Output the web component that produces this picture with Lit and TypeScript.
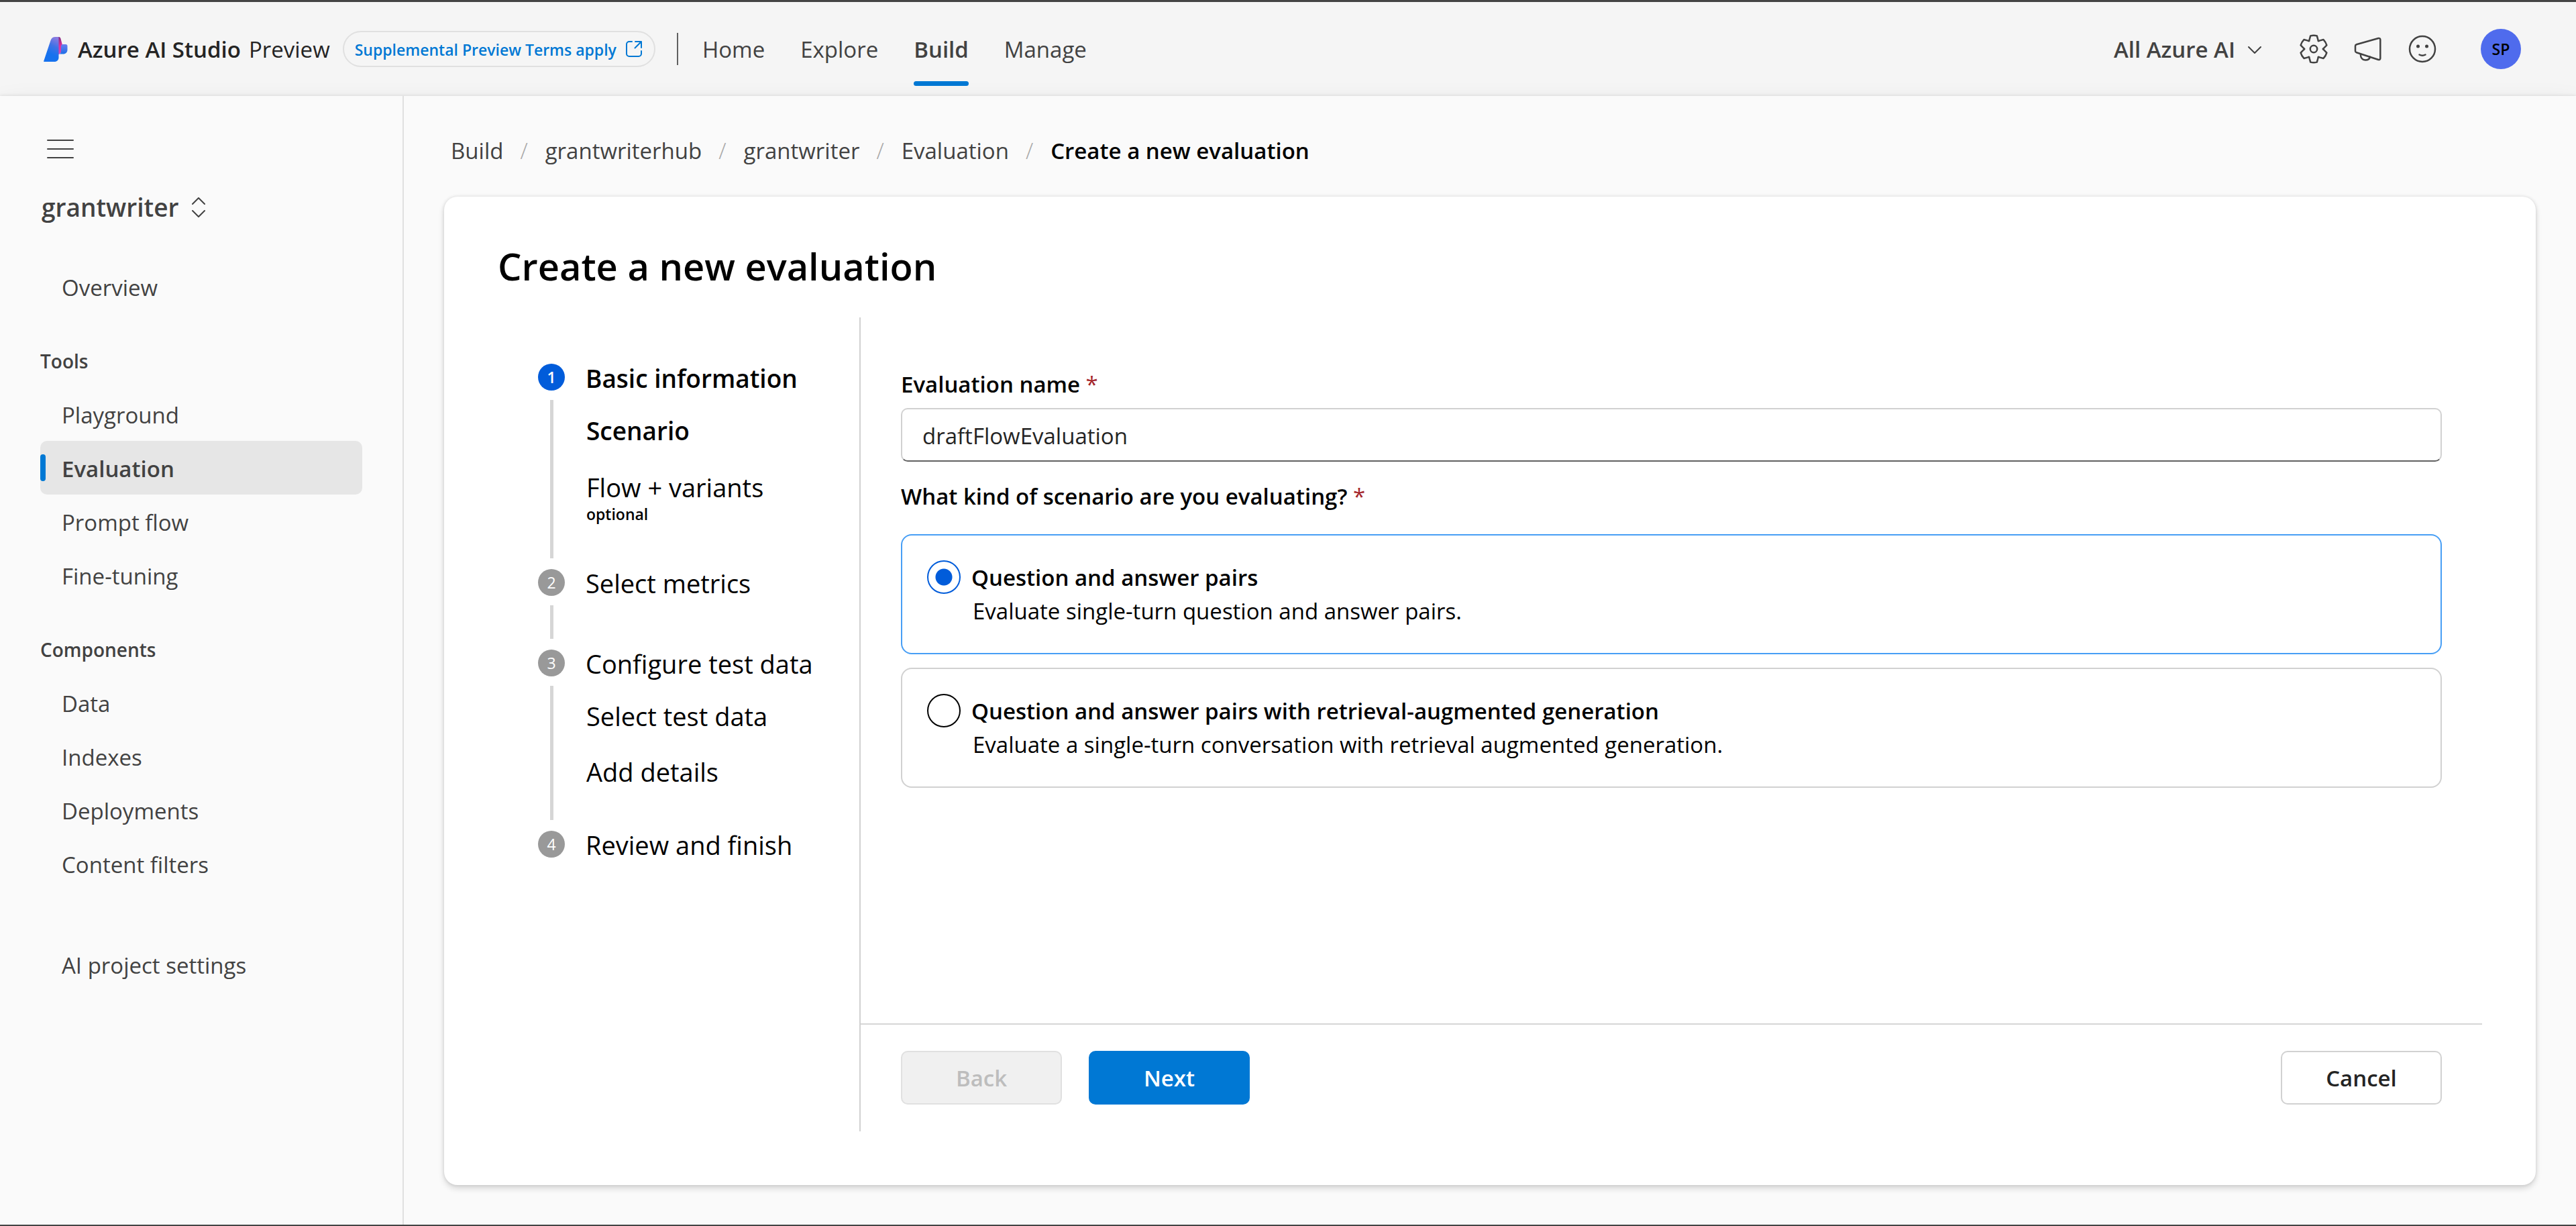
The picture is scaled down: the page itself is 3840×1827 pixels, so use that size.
import { LitElement, html, css, svg, nothing } from "lit";
import { customElement, state } from "lit/decorators.js";
import { classMap } from "lit/directives/class-map.js";

interface NavGroup {
  heading?: string;
  items: string[];
}

interface SubStep {
  label: string;
  note?: string;
  current?: boolean;
}

interface Step {
  label: string;
  current?: boolean;
  children: SubStep[];
}

interface Scenario {
  id: string;
  title: string;
  description: string;
}

const TOP_LINKS = ["Home", "Explore", "Build", "Manage"];

const NAV: NavGroup[] = [
  { heading: "Tools", items: ["Playground", "Evaluation", "Prompt flow", "Fine-tuning"] },
  { heading: "Components", items: ["Data", "Indexes", "Deployments", "Content filters"] },
];

const CRUMBS = ["Build", "grantwriterhub", "grantwriter", "Evaluation"];

const STEPS: Step[] = [
  {
    label: "Basic information",
    current: true,
    children: [
      { label: "Scenario", current: true },
      { label: "Flow + variants", note: "optional" },
    ],
  },
  { label: "Select metrics", children: [] },
  {
    label: "Configure test data",
    children: [{ label: "Select test data" }, { label: "Add details" }],
  },
  { label: "Review and finish", children: [] },
];

const SCENARIOS: Scenario[] = [
  {
    id: "qa",
    title: "Question and answer pairs",
    description: "Evaluate single-turn question and answer pairs.",
  },
  {
    id: "rag",
    title: "Question and answer pairs with retrieval-augmented generation",
    description: "Evaluate a single-turn conversation with retrieval augmented generation.",
  },
];

/* One tooth of the settings gear, repeated every 60 degrees. */
const gearPath = (() => {
  const tooth = [[-6.5, -13.5], [-4.8, -19.6], [4.8, -19.6], [6.5, -13.5]];
  const points: string[] = [];
  for (let k = 0; k < 6; k++) {
    const a = (k * Math.PI) / 3;
    const p = tooth.map(([x, y]) => [
      24 + x * Math.cos(a) - y * Math.sin(a),
      24 + x * Math.sin(a) + y * Math.cos(a),
    ]);
    const b = ((k + 0.5) * Math.PI) / 3;
    const next = ((k + 1) * Math.PI) / 3;
    const nx = 24 + tooth[0][0] * Math.cos(next) - tooth[0][1] * Math.sin(next);
    const ny = 24 + tooth[0][0] * Math.sin(next) + tooth[0][1] * Math.cos(next);
    const qx = 24 + 12.5 * Math.sin(b);
    const qy = 24 - 12.5 * Math.cos(b);
    points.push(
      `${k ? "L" : "M"}${p[0]}L${p[1]}Q${24 + 20.8 * Math.sin(a)},${24 - 20.8 * Math.cos(a)} ${p[2]}L${p[3]}Q${qx},${qy} ${nx},${ny}`,
    );
  }
  return points.join("") + "Z";
})();

const logo = svg`
  <svg class="logo" viewBox="0 0 36 38" aria-hidden="true">
    <defs>
      <linearGradient id="wing" x1="0.7" y1="0" x2="0.4" y2="1">
        <stop offset="0" stop-color="#8a7be0"></stop>
        <stop offset="0.35" stop-color="#3f72e6"></stop>
        <stop offset="0.7" stop-color="#1672ee"></stop>
      </linearGradient>
      <linearGradient id="fold" x1="0" y1="0" x2="0" y2="1">
        <stop offset="0" stop-color="#7b2a80"></stop>
        <stop offset="0.5" stop-color="#e0309a"></stop>
        <stop offset="1" stop-color="#c94fc4"></stop>
      </linearGradient>
      <linearGradient id="block" x1="0" y1="0" x2="0" y2="1">
        <stop offset="0" stop-color="#6a80ee"></stop>
        <stop offset="1" stop-color="#1c6fe8"></stop>
      </linearGradient>
    </defs>
    <path fill="url(#fold)" d="M17 1h5.500c2 0 2.800 1.500 3.200 3.500L28.500 15v7l-5.500 5h-1z"></path>
    <path fill="url(#block)" d="M28.500 12H33c1.500 0 2.500 1 2.500 2.500V20c0 4-2.500 6.500-6.500 6.500h-6.500c3 0 3.500-2.500 3.500-5v-6c0-2 .8-3.500 2.500-3.500z"></path>
    <path fill="url(#wing)" d="M17.500 1h5v30.500c0 4-2.500 6.500-6.500 6.500H1c-.6 0-1-.5-.8-1.100L10.500 6.200C11.600 2.800 14 1 17.500 1z"></path>
  </svg>`;

@customElement("app-root")
export class AppRoot extends LitElement {
  @state() private scenario = "qa";
  @state() private evaluationName = "draftFlowEvaluation";

  static styles = css`
    :host {
      display: block;
      font-family: "Open Sans", "Noto Sans", "Liberation Sans", sans-serif;
      font-size: 33px;
      line-height: 50px;
      color: #424242;
    }

    * {
      box-sizing: border-box;
    }

    h1, h2, p, ul, ol, fieldset {
      margin: 0;
      padding: 0;
      border: 0;
      list-style: none;
    }

    a {
      color: inherit;
      text-decoration: none;
    }

    button, input {
      font: inherit;
      color: inherit;
      margin: 0;
    }

    button {
      padding: 0;
      border: 0;
      background: none;
      cursor: pointer;
    }

    svg {
      display: block;
      flex: none;
    }

    .page {
      display: flex;
      flex-direction: column;
      min-height: 100vh;
      border-top: 3px solid #444444;
      border-bottom: 2px solid #444444;
      background: #fafafa;
    }

    /* Header */
    .header {
      display: flex;
      align-items: center;
      height: 140px;
      padding: 0 82px 0 65px;
      background: #f5f5f5;
    }

    .logo {
      width: 36px;
      height: 38px;
    }

    .brand {
      display: flex;
      gap: 12px;
      margin-left: 15px;
      padding-top: 2px;
      color: #242424;
    }

    .brand-name {
      font-weight: 600;
    }

    .terms {
      display: flex;
      align-items: center;
      gap: 12px;
      height: 54px;
      margin-left: 19px;
      padding: 2px 16px 0;
      border: 2px solid #e0e0e0;
      border-radius: 27px;
      font-size: 23px;
      font-weight: 600;
      color: #0078d4;
    }

    .terms svg {
      width: 28px;
      height: 28px;
    }

    .divider {
      width: 2px;
      height: 48px;
      margin-left: 32px;
      background: #616161;
    }

    .topnav {
      display: flex;
      align-self: stretch;
      gap: 53px;
      margin-left: 36px;
    }

    .toplink {
      position: relative;
      display: flex;
      align-items: center;
      padding-top: 2px;
    }

    .toplink.active {
      font-weight: 600;
    }

    .toplink.active::after {
      content: "";
      position: absolute;
      right: 0;
      bottom: 15px;
      left: 0;
      height: 7px;
      border-radius: 4px;
      background: #0078d4;
    }

    .tools {
      display: flex;
      align-items: center;
      gap: 33px;
      margin-left: auto;
    }

    .scope {
      display: flex;
      align-items: center;
      gap: 18px;
      margin-right: 20px;
      padding-top: 2px;
      font-weight: 600;
    }

    .scope svg {
      width: 22px;
      height: 22px;
    }

    .tools .icon {
      width: 48px;
      height: 48px;
    }

    .avatar {
      width: 60px;
      height: 60px;
      margin-left: 30px;
      border-radius: 50%;
      background: #4f6bed;
      color: #000000;
      font-size: 23px;
      font-weight: 600;
      line-height: 60px;
      text-align: center;
    }

    /* Body */
    .body {
      display: flex;
      flex: 1;
      position: relative;
      background: #fafafa;
      box-shadow: 0 0 5px rgba(0, 0, 0, 0.12), 0 20px 40px rgba(0, 0, 0, 0.14);
      clip-path: inset(-40px 0 0 0);
    }

    .sidebar {
      flex: none;
      width: 602px;
      padding: 54px 60px 0;
      border-right: 2px solid #e0e0e0;
    }

    .menu {
      display: block;
      height: 50px;
      padding: 0 10px;
    }

    .menu svg {
      width: 40px;
      height: 30px;
    }

    .project {
      display: flex;
      align-items: center;
      gap: 20px;
      margin: 35px 0 51px;
      padding-left: 2px;
      font-size: 37px;
      font-weight: 600;
      line-height: 54px;
    }

    .project svg {
      width: 20px;
      height: 32px;
    }

    .nav-heading {
      margin: 51px 0 19px;
      font-size: 28px;
      font-weight: 600;
      line-height: 40px;
    }

    .nav-link {
      position: relative;
      display: block;
      height: 80px;
      padding: 2px 32px 0;
      border-radius: 10px;
      line-height: 80px;
    }

    .nav-link.active {
      background: #e6e6e6;
      font-weight: 600;
    }

    .nav-link.active::before {
      content: "";
      position: absolute;
      top: 20px;
      left: 0;
      width: 8px;
      height: 40px;
      border-radius: 4px;
      background: #0078d4;
    }

    .nav-footer {
      margin-top: 70px;
    }

    .main {
      display: flex;
      flex: 1;
      flex-direction: column;
      min-width: 0;
      padding: 58px 60px 59px;
    }

    .crumbs {
      display: flex;
      gap: 26px;
      padding-left: 10px;
      line-height: 48px;
    }

    .crumb {
      display: flex;
      gap: 25px;
    }

    .crumb::after {
      content: "/";
      font-weight: 300;
      color: #a8a8a8;
    }

    .crumb-current {
      color: #000000;
      font-weight: 600;
    }

    .card {
      display: flex;
      flex: 1;
      flex-direction: column;
      margin-top: 44px;
      padding: 67px 80px 80px;
      border-radius: 20px;
      background: #ffffff;
      box-shadow: 0 0 5px rgba(0, 0, 0, 0.12), 0 5px 10px rgba(0, 0, 0, 0.14);
      color: #000000;
    }

    .title {
      font-size: 56px;
      font-weight: 600;
      line-height: 72px;
    }

    .wizard {
      display: flex;
      flex: 1;
      margin-top: 41px;
    }

    /* Steps */
    .steps {
      flex: none;
      width: 541px;
      padding: 69px 0 0 60px;
      border-right: 2px solid #d1d1d1;
      font-size: 38px;
      line-height: 42px;
    }

    .step {
      display: flex;
      gap: 31px;
    }

    .step:not(:last-child) {
      min-height: 120px;
    }

    .rail {
      display: flex;
      flex-direction: column;
      align-items: center;
    }

    .number {
      width: 40px;
      height: 40px;
      border-radius: 50%;
      background: #999999;
      color: #ffffff;
      font-size: 23px;
      line-height: 40px;
      text-align: center;
    }

    .number.current {
      background: #015cda;
    }

    .rail-bar {
      flex: 1;
      width: 5px;
      margin: 14px 0 16px;
      background: #d6d6d6;
    }

    .step.branch .step-text {
      padding-bottom: 67px;
    }

    .current {
      font-weight: 600;
    }

    .step-text .current {
      font-size: 37px;
      line-height: 44px;
    }

    .sub {
      margin-top: 36px;
      padding-left: 1px;
    }

    .current + .sub {
      margin-top: 34px;
    }

    .sub + .sub {
      margin-top: 41px;
    }

    .note {
      margin-top: 4px;
      font-size: 23px;
      font-weight: 600;
      line-height: 30px;
    }

    /* Form */
    .content {
      display: flex;
      flex: 1;
      flex-direction: column;
      min-width: 0;
    }

    .form {
      flex: 1;
      padding: 76px 60px 60px;
    }

    .label {
      display: block;
      padding: 0;
      font-weight: 600;
      line-height: 48px;
    }

    .required {
      color: #a4262c;
      font-weight: 400;
    }

    .text-input {
      display: block;
      width: 100%;
      height: 80px;
      margin: 11px 0 28px;
      padding: 2px 30px 0;
      border: 2px solid #d1d1d1;
      border-bottom-color: #616161;
      border-radius: 10px;
      background: #ffffff;
      color: #242424;
      outline: none;
    }

    .options {
      display: flex;
      flex-direction: column;
      gap: 20px;
      margin-top: 32px;
    }

    .option {
      display: flex;
      gap: 16px;
      padding: 37px;
      border: 2px solid #d1d1d1;
      border-radius: 16px;
      cursor: pointer;
    }

    .option.selected {
      border-color: #479ef5;
    }

    .radio {
      flex: none;
      width: 50px;
      height: 50px;
      appearance: none;
      border: 2px solid #000000;
      border-radius: 50%;
      outline: none;
    }

    .radio:checked {
      border-color: #015cda;
      background: radial-gradient(circle, #015cda 12px, transparent 13px);
    }

    .option-title {
      display: block;
      padding-top: 1px;
      font-weight: 600;
    }

    .option-text {
      display: block;
      padding-left: 2px;
    }

    .footer {
      display: flex;
      gap: 40px;
      padding: 39px 60px 40px;
      border-top: 2px solid #d6d6d6;
    }

    .btn {
      width: 240px;
      height: 80px;
      padding-top: 2px;
      border: 2px solid #d1d1d1;
      border-radius: 10px;
      background: #ffffff;
      color: #242424;
      font-weight: 600;
      line-height: 74px;
    }

    .btn:disabled {
      border-color: #e0e0e0;
      background: #f0f0f0;
      color: #bdbdbd;
      cursor: default;
    }

    .btn.primary {
      border-color: #0078d4;
      background: #0078d4;
      color: #ffffff;
    }

    .btn.end {
      margin-left: auto;
    }
  `;

  private renderHeader() {
    return html`
      <header class="header">
        ${logo}
        <div class="brand"><span class="brand-name">Azure AI Studio</span><span>Preview</span></div>
        <a class="terms" href="#terms">
          Supplemental Preview Terms apply
          <svg viewBox="0 0 28 28" fill="none" stroke="currentColor" stroke-width="2" stroke-linecap="round" stroke-linejoin="round" aria-hidden="true">
            <path d="M11 2H7a4 4 0 0 0-4 4v14a4 4 0 0 0 4 4h14a4 4 0 0 0 4-4v-4M16 2h9v9M25 2l-9.500 9.500"></path>
          </svg>
        </a>
        <span class="divider"></span>
        <nav class="topnav" aria-label="Studio">
          ${TOP_LINKS.map(
            (name) => html`<a href="#${name.toLowerCase()}" class=${classMap({ toplink: true, active: name === "Build" })}>${name}</a>`,
          )}
        </nav>
        <div class="tools">
          <button class="scope" type="button">
            All Azure AI
            <svg viewBox="0 0 22 22" fill="none" stroke="currentColor" stroke-width="2" stroke-linecap="round" stroke-linejoin="round" aria-hidden="true">
              <path d="M2 7l9 9 9-9"></path>
            </svg>
          </button>
          <button type="button" aria-label="Settings">
            <svg class="icon" viewBox="0 0 48 48" fill="none" stroke="currentColor" stroke-width="2.500" stroke-linejoin="round" aria-hidden="true">
              <path d=${gearPath}></path>
              <circle cx="24" cy="24" r="5.200"></circle>
            </svg>
          </button>
          <button type="button" aria-label="Announcements">
            <svg class="icon" viewBox="0 0 48 48" fill="none" stroke="currentColor" stroke-width="2.500" stroke-linecap="round" stroke-linejoin="round" aria-hidden="true">
              <path d="M6.800 17.300L39.500 8c1.500-.4 2.800.5 2.800 2v28c0 1.500-1.300 2.400-2.800 2L6.800 29.200c-1.100-.3-1.800-1.200-1.800-2.300v-7.300c0-1.100.7-2 1.800-2.300z"></path>
              <path d="M12.800 31.500c0 5.800 2.900 9.100 7.200 9.100 3.700 0 6.300-2 7-5"></path>
            </svg>
          </button>
          <button type="button" aria-label="Feedback">
            <svg class="icon" viewBox="0 0 48 48" fill="none" stroke="currentColor" stroke-width="2.500" stroke-linecap="round" aria-hidden="true">
              <circle cx="24" cy="24" r="19"></circle>
              <circle cx="17.500" cy="20" r="2.500" fill="currentColor" stroke="none"></circle>
              <circle cx="30.500" cy="20" r="2.500" fill="currentColor" stroke="none"></circle>
              <path d="M19.500 32.500c2.800 1.500 6.200 1.500 9 0"></path>
            </svg>
          </button>
          <button class="avatar" type="button">SP</button>
        </div>
      </header>
    `;
  }

  private renderNavLink(name: string) {
    return html`<li><a href="#" class=${classMap({ "nav-link": true, active: name === "Evaluation" })}>${name}</a></li>`;
  }

  private renderSidebar() {
    return html`
      <nav class="sidebar" aria-label="Project">
        <button class="menu" type="button" aria-label="Toggle navigation">
          <svg viewBox="0 0 40 30" fill="none" stroke="currentColor" stroke-width="2" stroke-linecap="round" aria-hidden="true">
            <path d="M1 2h38M1 15h38M1 28h38"></path>
          </svg>
        </button>
        <button class="project" type="button">
          grantwriter
          <svg viewBox="0 0 20 32" fill="none" stroke="currentColor" stroke-width="2" stroke-linecap="round" stroke-linejoin="round" aria-hidden="true">
            <path d="M1 11l9-9 9 9M1 21l9 9 9-9"></path>
          </svg>
        </button>
        <ul>${this.renderNavLink("Overview")}</ul>
        ${NAV.map(
          (group) => html`
            <h2 class="nav-heading">${group.heading}</h2>
            <ul>${group.items.map((name) => this.renderNavLink(name))}</ul>
          `,
        )}
        <ul class="nav-footer">${this.renderNavLink("AI project settings")}</ul>
      </nav>
    `;
  }

  private renderStep(step: Step, index: number) {
    const last = index === STEPS.length - 1;
    return html`
      <li class=${classMap({ step: true, branch: step.children.length > 0 })}>
        <div class="rail">
          <span class=${classMap({ number: true, current: !!step.current })}>${index + 1}</span>
          ${last ? nothing : html`<span class="rail-bar"></span>`}
        </div>
        <div class="step-text">
          <p class=${classMap({ current: !!step.current })}>${step.label}</p>
          ${step.children.map(
            (sub) => html`
              <div class="sub">
                <p class=${classMap({ current: !!sub.current })}>${sub.label}</p>
                ${sub.note ? html`<p class="note">${sub.note}</p>` : nothing}
              </div>
            `,
          )}
        </div>
      </li>
    `;
  }

  private renderForm() {
    return html`
      <form class="content" @submit=${(e: Event) => e.preventDefault()}>
        <div class="form">
          <label class="label" for="evaluation-name">Evaluation name <span class="required">*</span></label>
          <input
            class="text-input"
            id="evaluation-name"
            type="text"
            .value=${this.evaluationName}
            @input=${(e: Event) => (this.evaluationName = (e.target as HTMLInputElement).value)}
          />
          <fieldset>
            <legend class="label">What kind of scenario are you evaluating? <span class="required">*</span></legend>
            <div class="options">
              ${SCENARIOS.map(
                (s) => html`
                  <label class=${classMap({ option: true, selected: this.scenario === s.id })}>
                    <input
                      class="radio"
                      type="radio"
                      name="scenario"
                      value=${s.id}
                      .checked=${this.scenario === s.id}
                      @change=${() => (this.scenario = s.id)}
                    />
                    <span>
                      <span class="option-title">${s.title}</span>
                      <span class="option-text">${s.description}</span>
                    </span>
                  </label>
                `,
              )}
            </div>
          </fieldset>
        </div>
        <div class="footer">
          <button class="btn" type="button" disabled>Back</button>
          <button class="btn primary" type="submit">Next</button>
          <button class="btn end" type="button">Cancel</button>
        </div>
      </form>
    `;
  }

  render() {
    return html`
      <div class="page">
        ${this.renderHeader()}
        <div class="body">
          ${this.renderSidebar()}
          <main class="main">
            <nav class="crumbs" aria-label="Breadcrumb">
              ${CRUMBS.map((name) => html`<span class="crumb"><a href="#">${name}</a></span>`)}
              <span class="crumb-current" aria-current="page">Create a new evaluation</span>
            </nav>
            <section class="card">
              <h1 class="title">Create a new evaluation</h1>
              <div class="wizard">
                <ol class="steps">${STEPS.map((step, i) => this.renderStep(step, i))}</ol>
                ${this.renderForm()}
              </div>
            </section>
          </main>
        </div>
      </div>
    `;
  }
}
